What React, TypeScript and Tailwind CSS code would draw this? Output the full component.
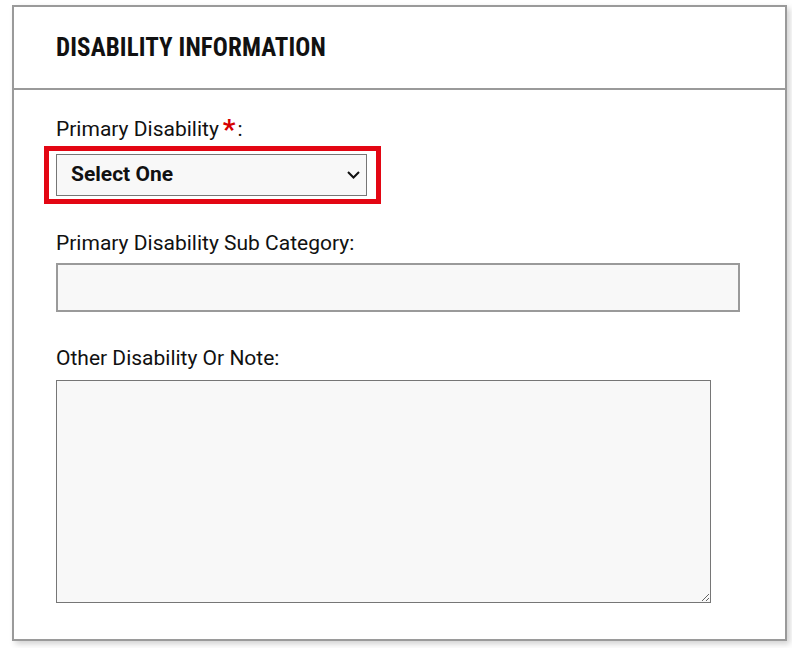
import React from 'react';

export default function App() {
  return (
    <div className="h-[648px] w-[792px] bg-white pl-[12px] pt-[5px] font-['Roboto',sans-serif] text-[#111]">
      <div className="h-[636px] w-[775px] border-2 border-[#9a9a9a] bg-white shadow-[3px_3px_6px_rgba(0,0,0,0.18)]">
        {/* Header */}
        <div className="flex h-[83px] items-center border-b-2 border-[#9a9a9a] pl-[42px] pt-[1px]">
          <h2 className="text-[25px] font-bold tracking-[0.1px] [font-stretch:75%]">DISABILITY INFORMATION</h2>
        </div>

        {/* Body */}
        <div className="px-[42px] pt-[27px]">
          <label className="flex items-start text-[21px] leading-[24px]">
            Primary Disability
            <span className="ml-[4px] mt-[-1px] text-[28px] font-bold leading-[28px] text-[#d60000]">*</span>
            <span className="ml-[2px]">:</span>
          </label>

          <div className="relative mt-[10px] w-[311px]">
            <div className="pointer-events-none absolute -left-[12px] -top-[8px] h-[58px] w-[337px] border-[5px] border-[#e30613]" />
            <div className="flex h-[42px] w-[311px] items-center justify-between border border-[#767676] bg-[#f8f8f8] pl-[14px] pr-[6px]">
              <span className="text-[21px] font-bold">Select One</span>
              <svg width="13" height="8" viewBox="0 0 13 8" fill="none">
                <path d="M1 1l5.5 5.5L12 1" stroke="#111" strokeWidth="2" />
              </svg>
            </div>
          </div>

          <label className="mt-[35px] block text-[21px] leading-[24px]">Primary Disability Sub Category:</label>
          <div className="mt-[8px] h-[49px] w-[684px] border-2 border-[#9a9a9a] bg-[#f8f8f8]" />

          <label className="mt-[34px] block text-[21px] leading-[24px]">Other Disability Or Note:</label>
          <textarea className="mt-[10px] block h-[223px] w-[655px] border border-[#767676] bg-[#f8f8f8] outline-none" />
        </div>
      </div>
    </div>
  );
}
